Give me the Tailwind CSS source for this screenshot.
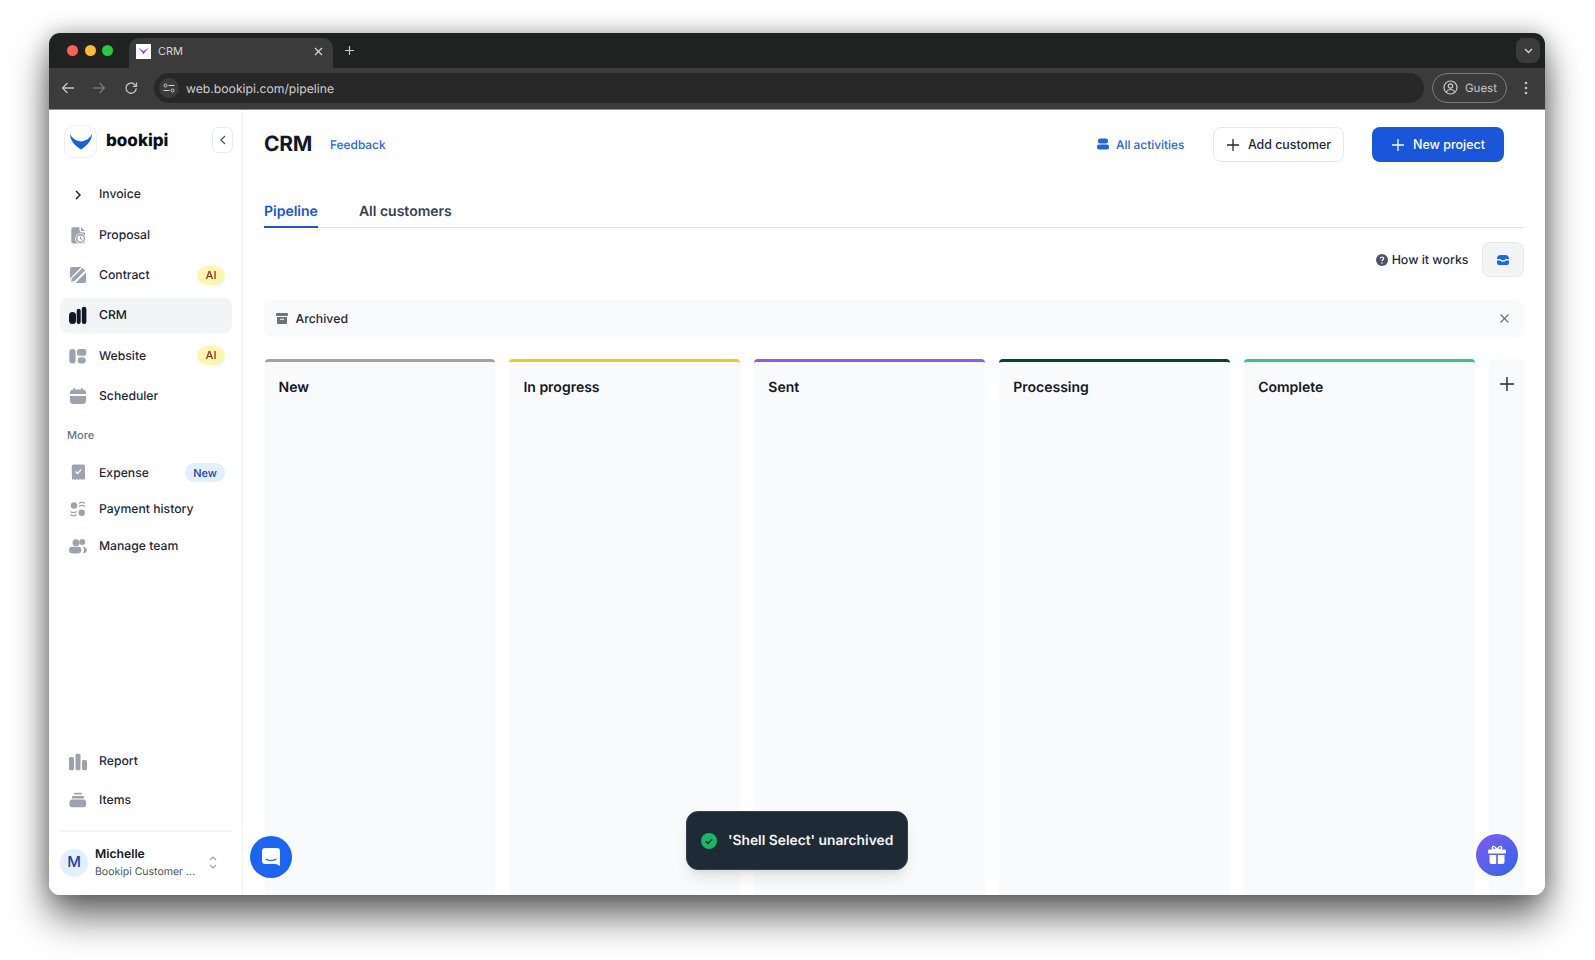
<!DOCTYPE html>
<html lang="en">
<head>
    <meta charset="UTF-8">
    <meta name="viewport" content="width=device-width, initial-scale=1.0">
    <title>CRM</title>
    <script src="https://cdn.jsdelivr.net/npm/@tailwindcss/browser@4"></script>
</head>
<body class="bg-white font-[Inter,sans-serif] [text-rendering:geometricPrecision] h-[960px] overflow-hidden pl-[49px] pt-[33px]">
    <!-- Window -->
    <div class="w-[1496px] h-[862px] rounded-[11px] shadow-[0_22px_38px_rgba(0,0,0,0.58),0_0_22px_rgba(0,0,0,0.28)]">
    <div class="relative w-full h-full rounded-[11px] overflow-hidden flex flex-col bg-white">

        <!-- Tab strip -->
        <div class="h-[35px] bg-[#202222] flex items-end relative shrink-0">
            <div class="flex items-center gap-[6.5px] pl-[18px] h-[35px] w-[80px]">
                <span class="w-[11px] h-[11px] rounded-full bg-[#ff5f57]"></span>
                <span class="w-[11px] h-[11px] rounded-full bg-[#febc2e]"></span>
                <span class="w-[11px] h-[11px] rounded-full bg-[#28c840]"></span>
            </div>
            <div class="h-[30px] w-[204px] bg-[#3b3b3b] rounded-t-[10px] flex items-center pl-[7px] pr-[10px] pb-[4px] text-[11px] text-[#d4d4d4]">
                <span class="w-[15px] h-[15px] bg-white flex items-center justify-center mr-[7px]">
                    <svg width="11" height="8" viewBox="0 0 11 8"><path d="M0.5 1C2 3 3.5 4.2 5.5 7.5C7.5 4.2 9 3 10.5 1C8.5 2.2 7 3 5.5 4C4 3 2.500 2.200 0.500 1Z" fill="#9b4fd6"/></svg>
                </span>
                <span class="flex-1">CRM</span>
                <svg width="9" height="9" viewBox="0 0 9 9" fill="none" stroke="#d4d4d4" stroke-width="1.2"><path d="M1 1l7 7M8 1l-7 7"/></svg>
            </div>
            <svg class="ml-[11px] mb-[12px]" width="11" height="11" viewBox="0 0 11 11" fill="none" stroke="#c8c8c8" stroke-width="1.2"><path d="M5.5 1v9M1 5.5h9"/></svg>
            <div class="ml-auto mr-[5px] mb-[5px] w-[24px] h-[25px] rounded-lg bg-[#3b3b3b] flex items-center justify-center">
                <svg width="9" height="6" viewBox="0 0 9 6" fill="none" stroke="#d4d4d4" stroke-width="1.3"><path d="M1 1l3.5 3.5L8 1"/></svg>
            </div>
        </div>

        <!-- Toolbar -->
        <div class="h-[42px] bg-[#3b3b3b] border-b border-[#8a8a8a] flex items-center shrink-0 pb-[2px]">
            <svg class="ml-[12px]" width="14" height="14" viewBox="0 0 14 14" fill="none" stroke="#c4c4c4" stroke-width="1.3"><path d="M13 7H1.5M6.5 2L1.5 7l5 5"/></svg>
            <svg class="ml-[17px]" width="14" height="14" viewBox="0 0 14 14" fill="none" stroke="#777" stroke-width="1.3"><path d="M1 7h11.5M7.5 2l5 5-5 5"/></svg>
            <svg class="ml-[18px]" width="14" height="14" viewBox="0 0 14 14" fill="none" stroke="#c4c4c4" stroke-width="1.3"><path d="M12.2 7.2a5.1 5.1 0 1 1-1.4-3.6L12.5 5.200M12.500 1.500v3.800H8.800"/></svg>
            <div class="ml-[16px] w-[1270px] h-[30px] rounded-full bg-[#282828] flex items-center pl-[5px]">
                <span class="w-[20px] h-[20px] rounded-full bg-[#3b3b3b] flex items-center justify-center">
                    <svg width="12" height="10" viewBox="0 0 12 10" fill="none" stroke="#d0d0d0" stroke-width="1"><circle cx="2.500" cy="2.500" r="1.500"/><path d="M5.500 2.500H11.500M0.500 7.500H6.500"/><circle cx="9.500" cy="7.500" r="1.500"/></svg>
                </span>
                <span class="ml-[7px] pt-[3px] text-[12.2px] text-[#cfcfcf]">web.bookipi.com/pipeline</span>
            </div>
            <div class="ml-[8px] w-[75px] h-[30px] rounded-full border border-[#7a7a7a] flex items-center pl-[10px] gap-[7px] text-[11.5px] text-[#c8c8c8]">
                <svg width="15" height="15" viewBox="0 0 15 15" fill="none" stroke="#c8c8c8" stroke-width="1.2"><circle cx="7.500" cy="7.500" r="6.500"/><circle cx="7.500" cy="6" r="2.200"/><path d="M3.200 12c1-1.800 2.500-2.500 4.300-2.500s3.300.7 4.300 2.500"/></svg>
                <span class="pt-[3px]">Guest</span>
            </div>
            <svg class="ml-[17px]" width="4" height="14" viewBox="0 0 4 14" fill="#c8c8c8"><circle cx="2" cy="2" r="1.300"/><circle cx="2" cy="7" r="1.300"/><circle cx="2" cy="12" r="1.300"/></svg>
        </div>

        <!-- App -->
        <div class="flex-1 flex min-h-0">

            <!-- Sidebar -->
            <aside class="w-[194px] shrink-0 border-r border-[#f0f1f3] flex flex-col pl-[11px] pr-[10px] text-[12.2px] font-medium text-[#1f2937]">
                <div class="h-[67px] shrink-0 flex pt-[15px] pl-[4px]">
                    <div class="w-[33px] h-[33px] rounded-[10px] border border-[#eceef1] flex items-center justify-center">
                        <svg width="24" height="17" viewBox="0 0 24 17"><path d="M1 1C3 5 6 7.500 12 8.500C18 7.500 21 5 23 1C23 7 19 12 12 16.500C5 12 1 7 1 1Z" fill="#1a5fe0"/></svg>
                    </div>
                    <span class="ml-[9px] mt-[4px] text-[17px] leading-[24px] font-extrabold text-[#0b0f19]">bookipi</span>
                    <button class="ml-auto mr-[-1px] mt-[2px] w-[21px] h-[26px] rounded-md border border-[#e9ebee] flex items-center justify-center">
                        <svg width="6" height="10" viewBox="0 0 6 10" fill="none" stroke="#4b5563" stroke-width="1.300"><path d="M5 1L1 5l4 4"/></svg>
                    </button>
                </div>

                <nav class="flex flex-col gap-[5.3px]">
                    <a class="h-[35px] flex items-center pl-[8px] pr-[7px] gap-[11px]">
                        <span class="w-[20px] flex justify-center"><svg width="6" height="10" viewBox="0 0 6 10" fill="none" stroke="#111827" stroke-width="1.400"><path d="M1 1l4 4-4 4"/></svg></span>
                        Invoice
                    </a>
                    <a class="h-[35px] flex items-center pl-[8px] pr-[7px] gap-[11px]">
                        <svg width="20" height="20" viewBox="0 0 20 20" fill="#9ca3af"><path d="M3.300 4.200a2 2 0 0 1 2-2h6.200v2.300a3 3 0 0 0 3 3H17v9a2 2 0 0 1-2 2H5.300a2 2 0 0 1-2-2Z"/><path d="M13 2.300l4 3.700h-4Z"/><circle cx="12.500" cy="13.500" r="5.300" fill="#fff"/><circle cx="12.500" cy="13.500" r="3.800" fill="none" stroke="#9ca3af" stroke-width="1.400"/><path d="M12.500 11.500v2.200l1.500.8" fill="none" stroke="#9ca3af" stroke-width="1.100"/></svg>
                        Proposal
                    </a>
                    <a class="h-[35px] flex items-center pl-[8px] pr-[7px] gap-[11px]">
                        <svg width="20" height="20" viewBox="0 0 20 20" fill="#9ca3af"><path d="M2 4a2 2 0 0 1 2-2h9.500L2 13.500Z"/><path d="M18 7.500V16a2 2 0 0 1-2 2H7.500Z"/><path d="M2.500 17.500l.8-4.300L14.500 2.500l3 3-11 11Z" fill="#9ca3af" stroke="#fff" stroke-width="1"/></svg>
                        <span class="flex-1">Contract</span>
                        <span class="w-[28px] h-[19px] rounded-full bg-[#fdf6b2] text-[#723b13] text-[11px] flex items-center justify-center">AI</span>
                    </a>
                    <a class="h-[35px] flex items-center pl-[8px] pr-[7px] gap-[11px] rounded-lg bg-[#f3f4f6] text-[#111827]">
                        <svg width="20" height="20" viewBox="0 0 20 20" fill="#111827"><rect x="1" y="7" width="7" height="12" rx="3.500"/><rect x="8.700" y="3.800" width="4" height="15.200" rx="2"/><rect x="13.800" y="1.700" width="4.600" height="17.300" rx="2.300"/></svg>
                        CRM
                    </a>
                    <a class="h-[35px] flex items-center pl-[8px] pr-[7px] gap-[11px]">
                        <svg width="20" height="20" viewBox="0 0 20 20" fill="#9ca3af"><rect x="1.300" y="3" width="6.300" height="14.500" rx="3"/><rect x="9" y="3" width="9.300" height="6.700" rx="2.500"/><rect x="9.700" y="11.300" width="8" height="6.200" rx="3"/></svg>
                        <span class="flex-1">Website</span>
                        <span class="w-[28px] h-[19px] rounded-full bg-[#fdf6b2] text-[#723b13] text-[11px] flex items-center justify-center">AI</span>
                    </a>
                    <a class="h-[35px] flex items-center pl-[8px] pr-[7px] gap-[11px]">
                        <svg width="20" height="20" viewBox="0 0 20 20" fill="#9ca3af"><path d="M2 7A3.500 3.500 0 0 1 5.500 3.500V2H7v1.500h6V2h1.500v1.500A3.500 3.500 0 0 1 18 7v1H2Z"/><path d="M2 10h16v4.500a3.500 3.500 0 0 1-3.500 3.500h-9A3.500 3.500 0 0 1 2 14.500Z"/></svg>
                        Scheduler
                    </a>
                </nav>

                <div class="mt-[14px] mb-[12px] pl-[7px] text-[11px] leading-[16px] text-[#6b7280]">More</div>

                <nav class="flex flex-col gap-[1.500px]">
                    <a class="h-[35px] flex items-center pl-[8px] pr-[7px] gap-[11px]">
                        <svg width="20" height="20" viewBox="0 0 20 20" fill="#9ca3af"><path d="M3.700 3.500a2 2 0 0 1 2-2h9.300a2 2 0 0 1 2 2v13.500l-1.600-.9-1.700.9-1.600-.9-1.600.9-1.600-.9-1.700.9-1.700-.9-1.500.9Z"/><path d="M7.500 8.500l2 2L13 6.800" fill="none" stroke="#fff" stroke-width="1.400"/></svg>
                        <span class="flex-1">Expense</span>
                        <span class="w-[40px] h-[19px] rounded-full bg-[#e1effe] text-[#1e429f] text-[11px] flex items-center justify-center">New</span>
                    </a>
                    <a class="h-[35px] flex items-center pl-[8px] pr-[7px] gap-[11px]">
                        <svg width="20" height="20" viewBox="0 0 20 20" fill="#9ca3af"><circle cx="6" cy="6.500" r="3.200"/><circle cx="13.700" cy="13.800" r="3.200"/><path d="M11 4.500C12.500 3 15.500 3 17 4.500M11 7.500C12.500 6 15.500 6 17 7.500M2.500 12.500C4 14 7 14 8.500 12.500M2.500 15.500C4 17 7 17 8.500 15.500" fill="none" stroke="#9ca3af" stroke-width="1.100"/></svg>
                        Payment history
                    </a>
                    <a class="h-[35px] pt-[1px] flex items-center pl-[8px] pr-[7px] gap-[11px]">
                        <svg width="20" height="20" viewBox="0 0 20 20" fill="#9ca3af"><circle cx="8" cy="6.700" r="3.500"/><circle cx="14.300" cy="6" r="3"/><rect x="1" y="10.700" width="12.300" height="6.700" rx="3.300"/><path d="M14.700 10.700c2.500 0 4.300 1.500 4.300 3.300s-1.800 3.400-4.300 3.400c1-1 1.300-2.200 1.300-3.400s-.3-2.300-1.300-3.300Z"/></svg>
                        Manage team
                    </a>
                </nav>

                <nav class="mt-auto flex flex-col gap-[3px]">
                    <a class="h-[35px] flex items-center pl-[8px] pr-[7px] gap-[11px]">
                        <svg width="20" height="20" viewBox="0 0 20 20" fill="#9ca3af"><rect x="1" y="5" width="5" height="13.300" rx="1.500"/><rect x="7.500" y="1.700" width="5" height="16.600" rx="1.500"/><rect x="14" y="8" width="5" height="10.300" rx="1.500"/></svg>
                        Report
                    </a>
                    <a class="h-[35px] pt-[1px] flex items-center pl-[8px] pr-[7px] gap-[11px]">
                        <svg width="20" height="20" viewBox="0 0 20 20" fill="#9ca3af"><rect x="6" y="2.700" width="8" height="1.800" rx="0.900"/><path d="M4 7a1 1 0 0 1 1-1h10a1 1 0 0 1 1 1v1.500H4Z"/><rect x="1.500" y="9.500" width="16.500" height="7.800" rx="2.500"/></svg>
                        Items
                    </a>
                </nav>

                <div class="mt-[13px] h-[65px] shrink-0 border-t-2 border-[#f3f4f6] flex items-center pb-[2px]">
                    <span class="w-[28px] h-[28px] rounded-full bg-[#e1effe] text-[#1e429f] text-[15px] flex items-center justify-center">M</span>
                    <div class="ml-[7px] w-[106px] whitespace-nowrap">
                        <div class="text-[12.2px] leading-[18px] font-semibold text-[#111827]">Michelle</div>
                        <div class="text-[10.5px] leading-[18px] font-normal text-[#4b5563]">Bookipi Customer ...</div>
                    </div>
                    <svg class="ml-[8px]" width="8" height="13" viewBox="0 0 8 13" fill="none" stroke="#9ca3af" stroke-width="1.200"><path d="M1 4l3-3 3 3M1 9l3 3 3-3"/></svg>
                </div>
            </aside>

            <!-- Main -->
            <main class="flex-1 min-w-0 flex flex-col pl-[21px] pr-[21px]">
                <div class="h-[35px] mt-[17px] shrink-0 flex items-center">
                    <h1 class="text-[21px] font-bold text-[#111827] tracking-[-0.3px]">CRM</h1>
                    <a class="ml-[18px] text-[11.9px] font-medium text-[#2563eb]">Feedback</a>
                    <a class="ml-auto flex items-center gap-[7px] text-[11.9px] font-medium text-[#2563eb]">
                        <svg width="12" height="12" viewBox="0 0 12 12" fill="#2563eb"><rect x="1" y="0.500" width="10" height="5" rx="2"/><rect x="0" y="6.500" width="12" height="5" rx="2"/></svg>
                        All activities
                    </a>
                    <button class="ml-[28px] w-[131px] h-[35px] pl-[2px] rounded-lg border border-[#e5e7eb] flex items-center justify-center gap-[9px] text-[12.4px] font-medium text-[#1f2937]">
                        <svg width="12" height="12" viewBox="0 0 12 12" fill="none" stroke="#1f2937" stroke-width="1.300"><path d="M6 0v12M0 6h12"/></svg>
                        <span class="pt-[2px]">Add customer</span>
                    </button>
                    <button class="ml-[28px] mr-[20.5px] w-[132px] h-[35px] pl-[2px] rounded-lg bg-[#1a56db] flex items-center justify-center gap-[9px] text-[12.5px] font-medium text-white">
                        <svg width="12" height="12" viewBox="0 0 12 12" fill="none" stroke="#fff" stroke-width="1.300"><path d="M6 0v12M0 6h12"/></svg>
                        <span class="pt-[2px]">New project</span>
                    </button>
                </div>

                <div class="h-[47px] mt-[19px] shrink-0 border-b border-[#e5e7eb] flex items-end gap-[41px] text-[14px] font-semibold">
                    <a class="h-[37px] pt-[10px] leading-[22px] border-b-2 border-[#1a56db] mb-[-1px] text-[#1a56db]">Pipeline</a>
                    <a class="h-[37px] pt-[10px] leading-[22px] border-b-2 border-transparent mb-[-1px] text-[#374151]">All customers</a>
                </div>

                <div class="mt-[14px] shrink-0 flex items-center justify-end">
                    <svg width="12" height="12" viewBox="0 0 12 12"><circle cx="6" cy="6" r="6" fill="#4b5563"/><path d="M4.300 4.600C4.300 3.600 5 3 6 3s1.700.6 1.700 1.500c0 1.200-1.700 1.200-1.700 2.500" fill="none" stroke="#fff" stroke-width="1.200"/><circle cx="6" cy="9" r=".8" fill="#fff"/></svg>
                    <span class="ml-[4px] pt-[2px] text-[12.4px] font-medium text-[#1f2937]">How it works</span>
                    <button class="ml-[13.5px] w-[42px] h-[35px] rounded-lg border border-[#e5e7eb] bg-[#f3f4f6] flex items-center justify-center">
                        <svg width="14" height="12" viewBox="0 0 14 12" fill="#1c64f2"><path d="M1 4.500C1 2 3 1 4.500 1h5C11 1 13 2 13 4.500V5H9.500c-.5 1-1.500 1.300-2.500 1.300S5 6 4.500 5H1Z"/><path d="M1 6.500h3c.7 1 1.800 1.300 3 1.300s2.300-.3 3-1.300h3V9a2 2 0 0 1-2 2H3a2 2 0 0 1-2-2Z"/></svg>
                    </button>
                </div>

                <div class="mt-[23px] h-[37px] shrink-0 rounded-lg bg-[#f9fafb] flex items-center pl-[11.500px] pr-[15px]">
                    <svg width="12" height="13" viewBox="0 0 12 13" fill="#6b7280"><rect x="0" y="1" width="12" height="3" rx="0.800"/><path d="M1 5h10v6a1 1 0 0 1-1 1H2a1 1 0 0 1-1-1Zm3 1.700v1h4v-1Z" fill-rule="evenodd"/></svg>
                    <span class="ml-[8px] pt-[2px] flex-1 text-[12.3px] font-medium text-[#1f2937]">Archived</span>
                    <svg width="9" height="9" viewBox="0 0 9 9" fill="none" stroke="#6b7280" stroke-width="1.200"><path d="M.5.500l8 8M8.500.500l-8 8"/></svg>
                </div>

                <!-- Board -->
                <div class="mt-[22px] ml-[0.5px] flex-1 min-h-0 flex gap-[14px]">
                    <section class="w-[231px] bg-[#f9fafb] border-t-[3px] border-[#9ca3af] rounded-t-[4px] px-[14px] pt-[16px] text-[14px] leading-[20px] font-semibold text-[#111827]">New</section>
                    <section class="w-[231px] bg-[#f9fafb] border-t-[3px] border-[#fdc80a] rounded-t-[4px] px-[14px] pt-[16px] text-[14px] leading-[20px] font-semibold text-[#111827]">In progress</section>
                    <section class="w-[231px] bg-[#f9fafb] border-t-[3px] border-[#8b5cf6] rounded-t-[4px] px-[14px] pt-[16px] text-[14px] leading-[20px] font-semibold text-[#111827]">Sent</section>
                    <section class="w-[231px] bg-[#f9fafb] border-t-[3px] border-[#014737] rounded-t-[4px] px-[14px] pt-[16px] text-[14px] leading-[20px] font-semibold text-[#111827]">Processing</section>
                    <section class="w-[231px] bg-[#f9fafb] border-t-[3px] border-[#2cc78c] rounded-t-[4px] px-[14px] pt-[16px] text-[14px] leading-[20px] font-semibold text-[#111827]">Complete</section>
                    <div class="w-[35px] bg-[#f9fafb] rounded-t-[4px] flex justify-center pt-[18px]">
                        <svg width="14" height="14" viewBox="0 0 14 14" fill="none" stroke="#1f2937" stroke-width="1.400"><path d="M7 0v14M0 7h14"/></svg>
                    </div>
                </div>
            </main>
        </div>

        <!-- Toast -->
        <div class="absolute left-[637px] top-[778px] w-[222px] h-[59px] rounded-xl bg-[#1f2a37] border border-[#374151] shadow-lg flex items-center pl-[14px] gap-[11px] text-[13.8px] font-semibold text-[#f3f4f6]">
            <svg width="16" height="16" viewBox="0 0 16 16"><circle cx="8" cy="8" r="8" fill="#16b765"/><path d="M4.800 8.200l2.200 2.200 4-4.200" fill="none" stroke="#1f2a37" stroke-width="1.500"/></svg>
            <span class="pt-[2px]">'Shell Select' unarchived</span>
        </div>

        <!-- Chat bubble -->
        <div class="absolute left-[201px] top-[803px] w-[42px] h-[42px] rounded-full bg-[#1c64f2] flex items-center justify-center">
            <svg width="20" height="20" viewBox="0 0 20 20"><path d="M4 1h12a3 3 0 0 1 3 3v15l-4-2H4a3 3 0 0 1-3-3V4a3 3 0 0 1 3-3Z" fill="#fff"/><path d="M4.500 12c3 2 8 2 11 0" fill="none" stroke="#1c64f2" stroke-width="1.200"/></svg>
        </div>

        <!-- Gift -->
        <div class="absolute left-[1427px] top-[801px] w-[42px] h-[42px] rounded-full bg-linear-to-br from-[#7c5cf0] to-[#2563eb] flex items-center justify-center">
            <svg width="20" height="20" viewBox="0 0 20 20" fill="#fff"><path d="M6 4.500C4.500 3 5.500 1 7 1.500c1.500.5 3 3 3 3s1.500-2.500 3-3c1.500-.5 2.500 1.500 1 3Z" fill="none" stroke="#fff" stroke-width="1.300"/><rect x="1" y="4.500" width="18" height="4" rx="1"/><path d="M2.500 10h6.700v9H4.500a2 2 0 0 1-2-2ZM10.800 10h6.700v7a2 2 0 0 1-2 2h-4.700Z"/></svg>
        </div>
    </div>
    </div>
</body>
</html>
